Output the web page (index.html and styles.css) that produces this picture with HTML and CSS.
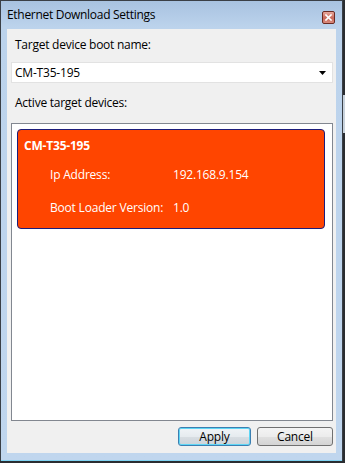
FILE: index.html
```html
<!DOCTYPE html>
<html>
<head>
<meta charset="utf-8">
<link rel="stylesheet" href="styles.css">
</head>
<body>
<div class="window">
  <div class="titlebar">
    <span class="title">Ethernet Download Settings</span>
    <span class="close">
      <svg width="7" height="7" viewBox="0 0 7 7"><path d="M1 1L6 6M6 1L1 6" stroke="#fff" stroke-width="1.6" stroke-linecap="square"/></svg>
    </span>
  </div>
  <div class="client">
    <div class="label first">Target device boot name:</div>
    <div class="combo">
      <span>CM-T35-195</span>
      <svg class="arrow" width="7" height="4" viewBox="0 0 7 4"><path d="M0 0H7L3.5 4Z" fill="#000"/></svg>
    </div>
    <div class="label second">Active target devices:</div>
    <div class="list">
      <div class="card">
        <div class="card-title">CM-T35-195</div>
        <div class="row"><span class="key">Ip Address:</span><span class="val">192.168.9.154</span></div>
        <div class="row"><span class="key">Boot Loader Version:</span><span class="val">1.0</span></div>
      </div>
    </div>
    <div class="buttons">
      <button class="btn apply">Apply</button>
      <button class="btn cancel">Cancel</button>
    </div>
  </div>
  <div class="bottomline"></div>
</div>
<div class="behind"></div>
</body>
</html>
```
FILE: styles.css
```css
html, body {
  margin: 0;
  padding: 0;
  background: #2a2d31;
}
body {
  width: 345px;
  height: 463px;
  overflow: hidden;
  position: relative;
  font-family: "Open Sans", "Noto Sans", sans-serif;
  font-size: 12px;
  color: #000;
}
.window {
  box-sizing: border-box;
  width: 343px;
  height: 461px;
  border: 1px solid #3a3f46;
  border-bottom: none;
  background: linear-gradient(#a8c2e0 0px, #bcd3ec 26px, #c0d6ee 100%);
  display: flex;
  flex-direction: column;
}
.titlebar {
  height: 28px;
  flex: none;
  display: flex;
  align-items: center;
  justify-content: space-between;
  padding: 0 7px 0 6px;
}
.title {
  font-size: 12px;
  letter-spacing: -0.3px;
  margin-top: -1px;
}
.close {
  width: 11px;
  height: 11px;
  border: 1px solid #6b2a22;
  border-radius: 2px;
  background: linear-gradient(#e8a79b, #c9695a 55%, #d98a7c);
  display: flex;
  align-items: center;
  justify-content: center;
  margin-top: 4px;
}
.client {
  flex: none;
  margin: 0 6px 0 6px;
  height: 424px;
  background: #f0f0f0;
  display: flex;
  flex-direction: column;
}
.label {
  padding-left: 8px;
  line-height: 16px;
  letter-spacing: -0.25px;
}
.label.first {
  margin-top: 8px;
}
.combo {
  margin: 9px 3px 0 4px;
  height: 19px;
  border: 1px solid #e2e2e2;
  background: #fff;
  display: flex;
  align-items: center;
  justify-content: space-between;
  padding: 0 6px 0 3px;
  letter-spacing: -0.2px;
}
.arrow {
  margin-top: 1px;
}
.label.second {
  margin-top: 12px;
}
.list {
  margin: 12px 3px 0 4px;
  height: 298px;
  border: 1px solid #828790;
  background: #fff;
  padding: 5px 0 0 5px;
  box-sizing: border-box;
}
.card {
  box-sizing: border-box;
  width: 308px;
  height: 100px;
  background: #ff4500;
  border: 1px solid #1c1c7a;
  border-radius: 4px;
  color: #fff;
  padding: 8px 0 0 6px;
  letter-spacing: -0.2px;
}
.card-title {
  font-weight: bold;
  line-height: 16px;
}
.row {
  display: flex;
  line-height: 16px;
  padding-left: 26px;
}
.row + .row {
  margin-top: 17px;
}
.card-title + .row {
  margin-top: 13px;
}
.key {
  width: 123px;
}
.buttons {
  display: flex;
  justify-content: flex-end;
  gap: 6px;
  margin: 6px 3px 0 0;
}
.btn {
  font-family: inherit;
  font-size: 12px;
  letter-spacing: -0.2px;
  height: 19px;
  padding: 0;
  border: 1px solid #707070;
  border-radius: 3px;
  background: linear-gradient(#f4f4f4 0%, #ececec 50%, #e0e0e0 51%, #d4d4d4 100%);
  color: #000;
  line-height: 15px;
}
.apply {
  width: 73px;
  border-color: #3c7fb1;
  background: linear-gradient(#f0f4f7 0%, #e6ebef 50%, #d8dee3 51%, #ccd3d9 100%);
  box-shadow: inset 0 0 0 1px #5fd6f5;
}
.cancel {
  width: 76px;
}
.bottomline {
  margin-top: auto;
  height: 1px;
  background: #7fd3f2;
  margin-bottom: 0;
}
.behind {
  position: absolute;
  left: 343px;
  top: 95px;
  width: 2px;
  height: 38px;
  background: #c8d2dc;
}
```
